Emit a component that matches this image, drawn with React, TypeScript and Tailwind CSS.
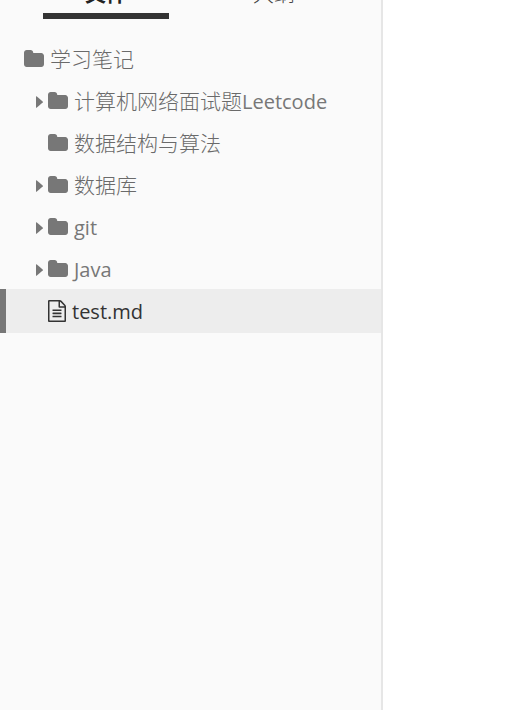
import React, { useState } from "react";

const FolderIcon = () => (
  <svg viewBox="0 0 1664 1488" className="h-[18px] w-5 shrink-0 fill-current" preserveAspectRatio="none" aria-hidden="true">
    <path d="M1664 480v704q0 92-66 158t-158 66h-1216q-92 0-158-66t-66-158v-960q0-92 66-158t158-66h320q92 0 158 66t66 158v32h672q92 0 158 66t66 158z" />
  </svg>
);

const FileIcon = () => (
  <svg viewBox="0 0 1536 1792" className="h-[22px] w-[18px] shrink-0 fill-current" preserveAspectRatio="none" aria-hidden="true">
    <path d="M1468 380q28 28 48 76t20 88v1152q0 40-28 68t-68 28h-1344q-40 0-68-28t-28-68v-1600q0-40 28-68t68-28h896q40 0 88 20t76 48zm-444-244v376h376q-10-29-22-41l-313-313q-12-12-41-22zm384 1528v-1024h-416q-40 0-68-28t-28-68v-416h-768v1536h1280zm-1024-864q0-14 9-23t23-9h704q14 0 23 9t9 23v64q0 14-9 23t-23 9h-704q-14 0-23-9t-9-23v-64zm736 224q14 0 23 9t9 23v64q0 14-9 23t-23 9h-704q-14 0-23-9t-9-23v-64q0-14 9-23t23-9h704zm0 256q14 0 23 9t9 23v64q0 14-9 23t-23 9h-704q-14 0-23-9t-9-23v-64q0-14 9-23t23-9h704z" />
  </svg>
);

const CaretIcon = () => (
  <svg viewBox="0 0 7 12" className="h-3 w-[7px] fill-current" aria-hidden="true">
    <path d="M0 0.5Q0 0 0.6 0.3L6.7 5.6Q7 6 6.7 6.4L0.6 11.7Q0 12 0 11.5Z" />
  </svg>
);

const Label = ({ zh, latin }: { zh?: string; latin?: string }) => (
  <span className="whitespace-nowrap pt-0.5">
    {zh && <span className="font-light text-[#6a6a6a]">{zh}</span>}
    {latin && <span className="text-xl">{latin}</span>}
  </span>
);

const folders = [
  { zh: "计算机网络面试题", latin: "Leetcode", expandable: true },
  { zh: "数据结构与算法", expandable: false },
  { zh: "数据库", expandable: true },
  { latin: "git", expandable: true },
  { latin: "Java", expandable: true },
];

export default function App() {
  const [tab, setTab] = useState("files");
  const tabClass = "flex h-10 w-[126px] items-start justify-center border-b-6 leading-7";
  const active = " border-[#333] font-bold text-[#222]";
  const idle = " border-transparent font-light text-[#444]";

  return (
    <div className="flex min-h-screen bg-white font-['Open_Sans','Noto_Sans_CJK_SC',sans-serif] text-[21px] text-[#777]">
      <aside className="w-[383px] shrink-0 border-r-2 border-[#e6e6e6] bg-[#fafafa]">
        <div className="flex h-[19px] items-end gap-[42px] overflow-hidden pl-[43px]" role="tablist">
          <button role="tab" aria-selected={tab === "files"} onClick={() => setTab("files")} className={tabClass + (tab === "files" ? active : idle)}>
            文件
          </button>
          <button role="tab" aria-selected={tab === "outline"} onClick={() => setTab("outline")} className={tabClass + (tab === "outline" ? active : idle)}>
            大纲
          </button>
        </div>
        <nav className="pt-[19px]">
          <button className="flex h-[42px] w-full items-center gap-1.5 pl-6 text-left">
            <FolderIcon />
            <Label zh="学习笔记" />
          </button>
          <ul>
            {folders.map((folder) => (
              <li key={folder.zh ?? folder.latin}>
                <button className="flex h-[42px] w-full items-center pl-9 text-left">
                  <span className="w-3 shrink-0 pt-0.5">{folder.expandable && <CaretIcon />}</span>
                  <span className="flex items-center gap-1.5">
                    <FolderIcon />
                    <Label zh={folder.zh} latin={folder.latin} />
                  </span>
                </button>
              </li>
            ))}
            <li className="-my-px">
              <button aria-current="true" className="flex h-11 w-full items-center gap-1.5 border-l-6 border-[#777] bg-[#ededed] pl-[42px] text-left text-[#333]">
                <FileIcon />
                <Label latin="test.md" />
              </button>
            </li>
          </ul>
        </nav>
      </aside>
      <main className="flex-1 bg-white" />
    </div>
  );
}
